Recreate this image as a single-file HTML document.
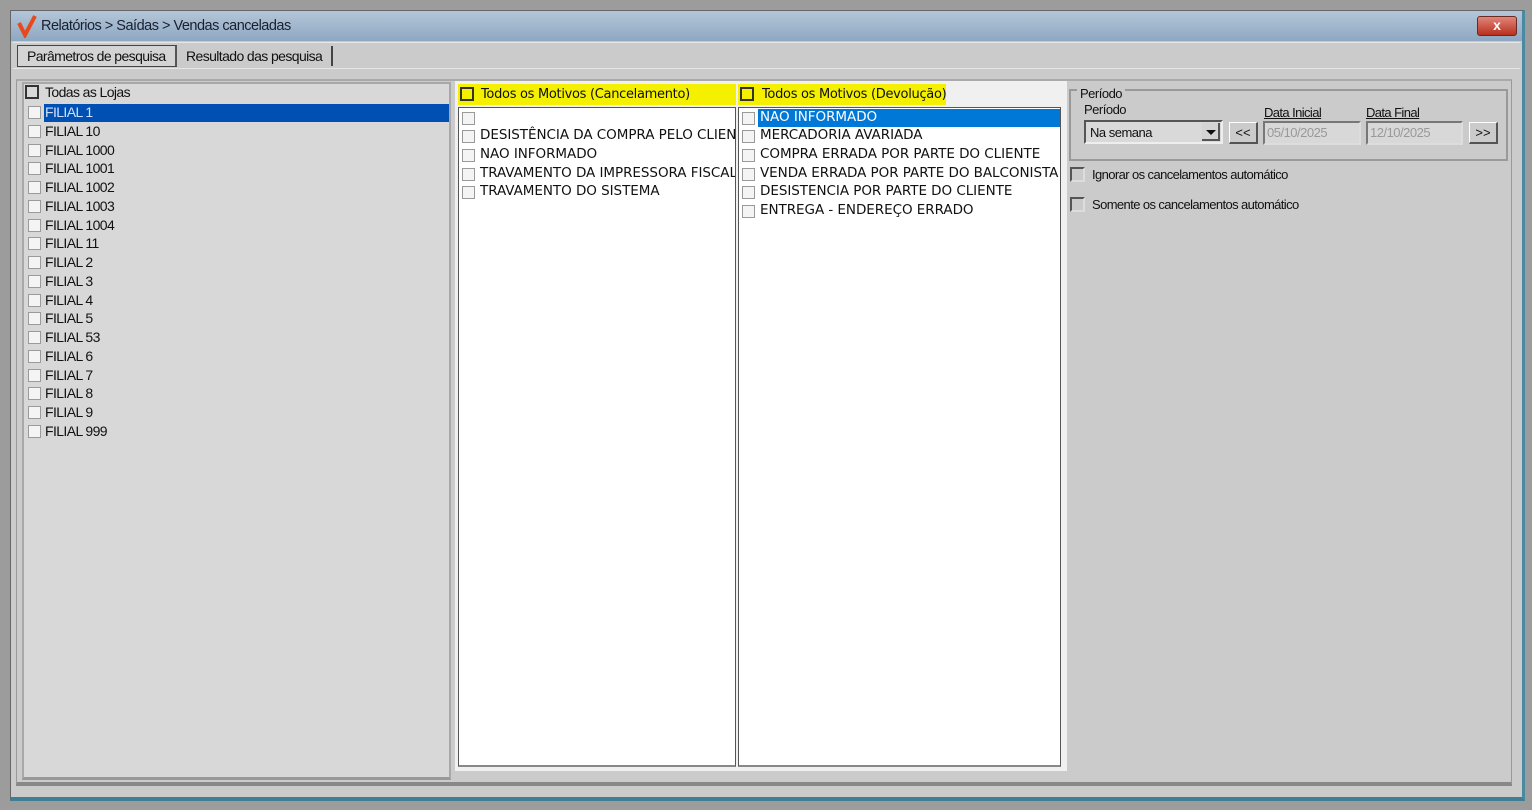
<!DOCTYPE html>
<html><head><meta charset="utf-8"><style>
*{box-sizing:border-box;margin:0;padding:0}
body{width:1532px;height:810px;background:#9c9c9c;position:relative;overflow:hidden;font-family:"Liberation Sans",sans-serif;font-size:14px;color:#111}
.a{position:absolute}
.cb{position:absolute;width:13px;height:13px;border:1px solid #9a9a9a;background:#f4f4f4}
.cbd{position:absolute;width:14px;height:14px;border:2px solid #333;background:transparent}
.row{position:absolute;left:0;height:19px;white-space:nowrap;letter-spacing:-0.6px}
.mrow{position:absolute;height:19px;white-space:nowrap;font-family:"DejaVu Sans",sans-serif;font-size:13.5px;letter-spacing:-0.05px}
</style></head><body>
<div class="a" style="left:10px;top:10px;width:1515px;height:791px;background:#cbcbcb;border:1px solid #666;border-bottom:4px solid #3f7f94;border-right:3px solid #4a8aa0"></div>
<div class="a" style="left:11px;top:11px;width:1511px;height:30px;background:linear-gradient(#b4c6d8,#8ea8c2)"></div>
<svg class="a" style="left:16px;top:14px" width="22" height="24"><path d="M3 9 L9 21 L19 2" stroke="#e8481c" stroke-width="4" fill="none"/></svg>
<div class="a" style="left:41px;top:18px;font-size:14.5px;letter-spacing:-0.5px;color:#1a2030">Relatórios &gt; Saídas &gt; Vendas canceladas</div>
<div class="a" style="left:1477px;top:16px;width:40px;height:20px;border-radius:3px;background:linear-gradient(#e0857a,#b8301e);border:1px solid #6a2a20;color:#fff;font-weight:bold;text-align:center;line-height:17px;font-size:14px">x</div>
<div class="a" style="left:13px;top:42px;width:1507px;height:1px;background:#e6e6e6"></div>
<div class="a" style="left:17px;top:45px;width:160px;height:22px;border:1px solid #444;border-right:2px solid #555;background:#d4d4d4;font-size:14px;letter-spacing:-0.6px;padding:2px 0 0 9px">Parâmetros de pesquisa</div>
<div class="a" style="left:186px;top:48px;font-size:14px;letter-spacing:-0.6px">Resultado das pesquisa</div>
<div class="a" style="left:331px;top:46px;width:2px;height:20px;background:#444"></div>
<div class="a" style="left:13px;top:68px;width:1507px;height:1px;background:#e6e6e6"></div>
<div class="a" style="left:16px;top:79px;width:1496px;height:707px;border:1px solid #999;border-top:2px solid #aaa;border-bottom:4px solid #888;background:#cbcbcb"></div>
<div class="a" style="left:22px;top:82px;width:429px;height:698px;background:#d8d8d8;border:2px solid #a8a8a8;border-bottom:3px solid #999"></div>
<div class="cbd" style="left:25px;top:85px"></div>
<div class="a" style="left:45px;top:84px;letter-spacing:-0.6px">Todas as Lojas</div>
<div class="a" style="left:44px;top:104px;width:405px;height:18px;background:#0050b4"></div>
<div class="a" style="left:26px;top:103px;width:420px">
<div class="row" style="top:0;color:#cfe0ff"><span class="cb" style="left:2px;top:3px"></span><span style="position:absolute;left:19px;top:1px">FILIAL 1</span></div>
</div>
<div id="fl" class="a" style="left:26px;top:103px;width:420px"></div>
<div class="a" style="left:455px;top:81px;width:612px;height:690px;background:#f0f0f0"></div>
<div class="a" style="left:458px;top:84px;width:278px;height:21px;background:#f4f000"></div>
<div class="a" style="left:738px;top:84px;width:208px;height:21px;background:#f4f000"></div>
<div class="cbd" style="left:460px;top:87px;border-color:#333"></div>
<div class="a" style="left:481px;top:87px;font-family:'DejaVu Sans',sans-serif;font-size:13px;letter-spacing:-0.3px">Todos os Motivos (Cancelamento)</div>
<div class="cbd" style="left:740px;top:87px"></div>
<div class="a" style="left:762px;top:87px;font-family:'DejaVu Sans',sans-serif;font-size:13px;letter-spacing:-0.3px">Todos os Motivos (Devolução)</div>
<div class="a" style="left:458px;top:107px;width:278px;height:660px;background:#fff;border:1px solid #555;border-bottom:2px solid #888;overflow:hidden">
<div class="mrow" style="top:1px"><span class="cb" style="left:3px;top:3px"></span></div>
<div class="mrow" style="top:19px"><span class="cb" style="left:3px;top:3px"></span><span style="position:absolute;left:21px;top:0">DESISTÊNCIA DA COMPRA PELO CLIENTE</span></div>
<div class="mrow" style="top:38px"><span class="cb" style="left:3px;top:3px"></span><span style="position:absolute;left:21px;top:0">NAO INFORMADO</span></div>
<div class="mrow" style="top:57px"><span class="cb" style="left:3px;top:3px"></span><span style="position:absolute;left:21px;top:0">TRAVAMENTO DA IMPRESSORA FISCAL</span></div>
<div class="mrow" style="top:75px"><span class="cb" style="left:3px;top:3px"></span><span style="position:absolute;left:21px;top:0">TRAVAMENTO DO SISTEMA</span></div>
</div>
<div class="a" style="left:738px;top:107px;width:323px;height:660px;background:#fff;border:1px solid #555;border-bottom:2px solid #888;overflow:hidden">
<div class="a" style="left:19px;top:1px;width:302px;height:18px;background:#0078d7"></div>
<div class="mrow" style="top:1px"><span class="cb" style="left:3px;top:3px"></span><span style="position:absolute;left:21px;top:0;color:#fff">NAO INFORMADO</span></div>
<div class="mrow" style="top:19px"><span class="cb" style="left:3px;top:3px"></span><span style="position:absolute;left:21px;top:0">MERCADORIA AVARIADA</span></div>
<div class="mrow" style="top:38px"><span class="cb" style="left:3px;top:3px"></span><span style="position:absolute;left:21px;top:0">COMPRA ERRADA POR PARTE DO CLIENTE</span></div>
<div class="mrow" style="top:57px"><span class="cb" style="left:3px;top:3px"></span><span style="position:absolute;left:21px;top:0">VENDA ERRADA POR PARTE DO BALCONISTA</span></div>
<div class="mrow" style="top:75px"><span class="cb" style="left:3px;top:3px"></span><span style="position:absolute;left:21px;top:0">DESISTENCIA POR PARTE DO CLIENTE</span></div>
<div class="mrow" style="top:94px"><span class="cb" style="left:3px;top:3px"></span><span style="position:absolute;left:21px;top:0">ENTREGA - ENDEREÇO ERRADO</span></div>
</div>
<div class="a" style="left:1069px;top:89px;width:439px;height:72px;border:2px solid #999"></div>
<div class="a" style="left:1077px;top:86px;background:#cbcbcb;padding:0 3px;font-size:13px;letter-spacing:-0.5px">Período</div>
<div class="a" style="left:1084px;top:102px;font-size:13px;letter-spacing:-0.5px">Período</div>
<div class="a" style="left:1264px;top:105px;font-size:13px;letter-spacing:-0.6px;text-decoration:underline">Data Inicial</div>
<div class="a" style="left:1366px;top:105px;font-size:13px;letter-spacing:-0.6px;text-decoration:underline">Data Final</div>
<div class="a" style="left:1084px;top:120px;width:139px;height:24px;border:2px solid #555;border-right-color:#eee;border-bottom-color:#eee;background:#d9d9d9;font-size:13px;letter-spacing:-0.5px;padding:3px 0 0 4px">Na semana</div>
<div class="a" style="left:1202px;top:123px;width:18px;height:18px;background:#d4d4d4;border-right:2px solid #555;border-bottom:2px solid #555"></div>
<svg class="a" style="left:1205px;top:129px" width="12" height="8"><path d="M1 1 L11 1 L6 6Z" fill="#111"/></svg>
<div class="a" style="left:1229px;top:122px;width:29px;height:22px;border:1px solid #fff;border-right:2px solid #555;border-bottom:2px solid #555;font-size:13px;text-align:center;line-height:20px">&lt;&lt;</div>
<div class="a" style="left:1263px;top:121px;width:98px;height:24px;border:2px solid #777;border-right-color:#ddd;border-bottom-color:#ddd;background:#d8d8d8;color:#999;font-size:13px;letter-spacing:-0.5px;padding:2px 0 0 2px">05/10/2025</div>
<div class="a" style="left:1366px;top:121px;width:97px;height:24px;border:2px solid #777;border-right-color:#ddd;border-bottom-color:#ddd;background:#d8d8d8;color:#999;font-size:13px;letter-spacing:-0.5px;padding:2px 0 0 2px">12/10/2025</div>
<div class="a" style="left:1469px;top:122px;width:29px;height:22px;border:1px solid #fff;border-right:2px solid #555;border-bottom:2px solid #555;font-size:13px;text-align:center;line-height:20px">&gt;&gt;</div>
<div class="a" style="left:1070px;top:167px;width:15px;height:15px;border:2px solid #555;border-right-color:#ddd;border-bottom-color:#ddd"></div>
<div class="a" style="left:1092px;top:167px;font-size:13px;letter-spacing:-0.6px">Ignorar os cancelamentos automático</div>
<div class="a" style="left:1070px;top:197px;width:15px;height:15px;border:2px solid #555;border-right-color:#ddd;border-bottom-color:#ddd"></div>
<div class="a" style="left:1092px;top:197px;font-size:13px;letter-spacing:-0.6px">Somente os cancelamentos automático</div>
<script>
var n=["FILIAL 10","FILIAL 1000","FILIAL 1001","FILIAL 1002","FILIAL 1003","FILIAL 1004","FILIAL 11","FILIAL 2","FILIAL 3","FILIAL 4","FILIAL 5","FILIAL 53","FILIAL 6","FILIAL 7","FILIAL 8","FILIAL 9","FILIAL 999"],h="";
n.forEach(function(s,i){h+='<div class="row" style="top:'+((i+1)*18.75)+'px"><span class="cb" style="left:2px;top:3px"></span><span style="position:absolute;left:19px;top:1px">'+s+'</span></div>'});
document.getElementById("fl").innerHTML=h;
</script>
</body></html>
